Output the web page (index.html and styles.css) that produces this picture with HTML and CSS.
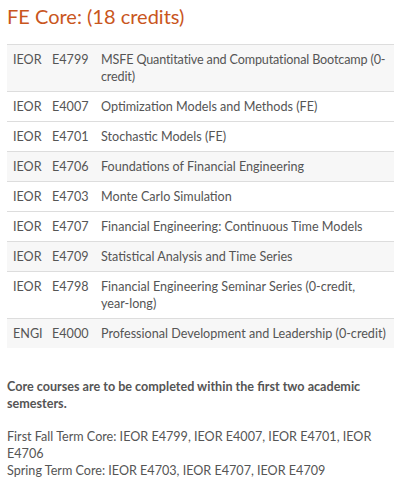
FILE: index.html
```html
<!DOCTYPE html>
<html>
<head>
<meta charset="utf-8">
<link rel="stylesheet" href="styles.css">
</head>
<body>
<h2 class="title">FE Core: (18 credits)</h2>
<table class="courses">
  <colgroup><col class="c1"><col class="c2"><col></colgroup>
  <tr class="alt"><td>IEOR</td><td>E4799</td><td class="tight">MSFE Quantitative and Computational Bootcamp (0-credit)</td></tr>
  <tr><td>IEOR</td><td>E4007</td><td>Optimization Models and Methods (FE)</td></tr>
  <tr><td>IEOR</td><td>E4701</td><td>Stochastic Models (FE)</td></tr>
  <tr class="alt"><td>IEOR</td><td>E4706</td><td>Foundations of Financial Engineering</td></tr>
  <tr><td>IEOR</td><td>E4703</td><td>Monte Carlo Simulation</td></tr>
  <tr><td>IEOR</td><td>E4707</td><td>Financial Engineering: Continuous Time Models</td></tr>
  <tr class="alt"><td>IEOR</td><td>E4709</td><td>Statistical Analysis and Time Series</td></tr>
  <tr><td>IEOR</td><td>E4798</td><td>Financial Engineering Seminar Series (0-credit, <span class="nw">year-long)</span></td></tr>
  <tr class="alt"><td>ENGI</td><td>E4000</td><td>Professional Development and Leadership (0-credit)</td></tr>
</table>
<p class="note"><strong>Core courses are to be completed within the first two academic semesters.</strong></p>
<p class="note">First Fall Term Core: IEOR E4799, IEOR E4007, IEOR E4701, IEOR E4706<br>Spring Term Core: IEOR E4703, IEOR E4707, IEOR E4709</p>
</body>
</html>
```

FILE: styles.css
```css
body {
  margin: 0;
  padding: 0 12px 0 7px;
  font-family: Lato, "Liberation Sans", sans-serif;
  font-size: 12.6px;
  line-height: 17px;
  color: #555;
  background: #fff;
}
.title {
  margin: 4px 0 16px;
  font-size: 20px;
  line-height: 24px;
  font-weight: 400;
  color: #c9561d;
}
.courses {
  width: 387px;
  border-collapse: collapse;
  table-layout: fixed;
}
.c1 { width: 39px; }
.c2 { width: 49px; }
.courses td {
  border-top: 1px solid #ddd;
  padding: 6px 0 6px 6px;
  vertical-align: top;
}
.courses td:last-child { padding-right: 2px; }
.courses td.tight { letter-spacing: -0.15px; }
.courses tr.alt td { background: #f7f7f7; }
.nw { white-space: nowrap; }
.note {
  margin: 30px 0 0;
}
.note + .note { margin-top: 16px; }
.note strong { font-weight: 700; color: #555; }
```
